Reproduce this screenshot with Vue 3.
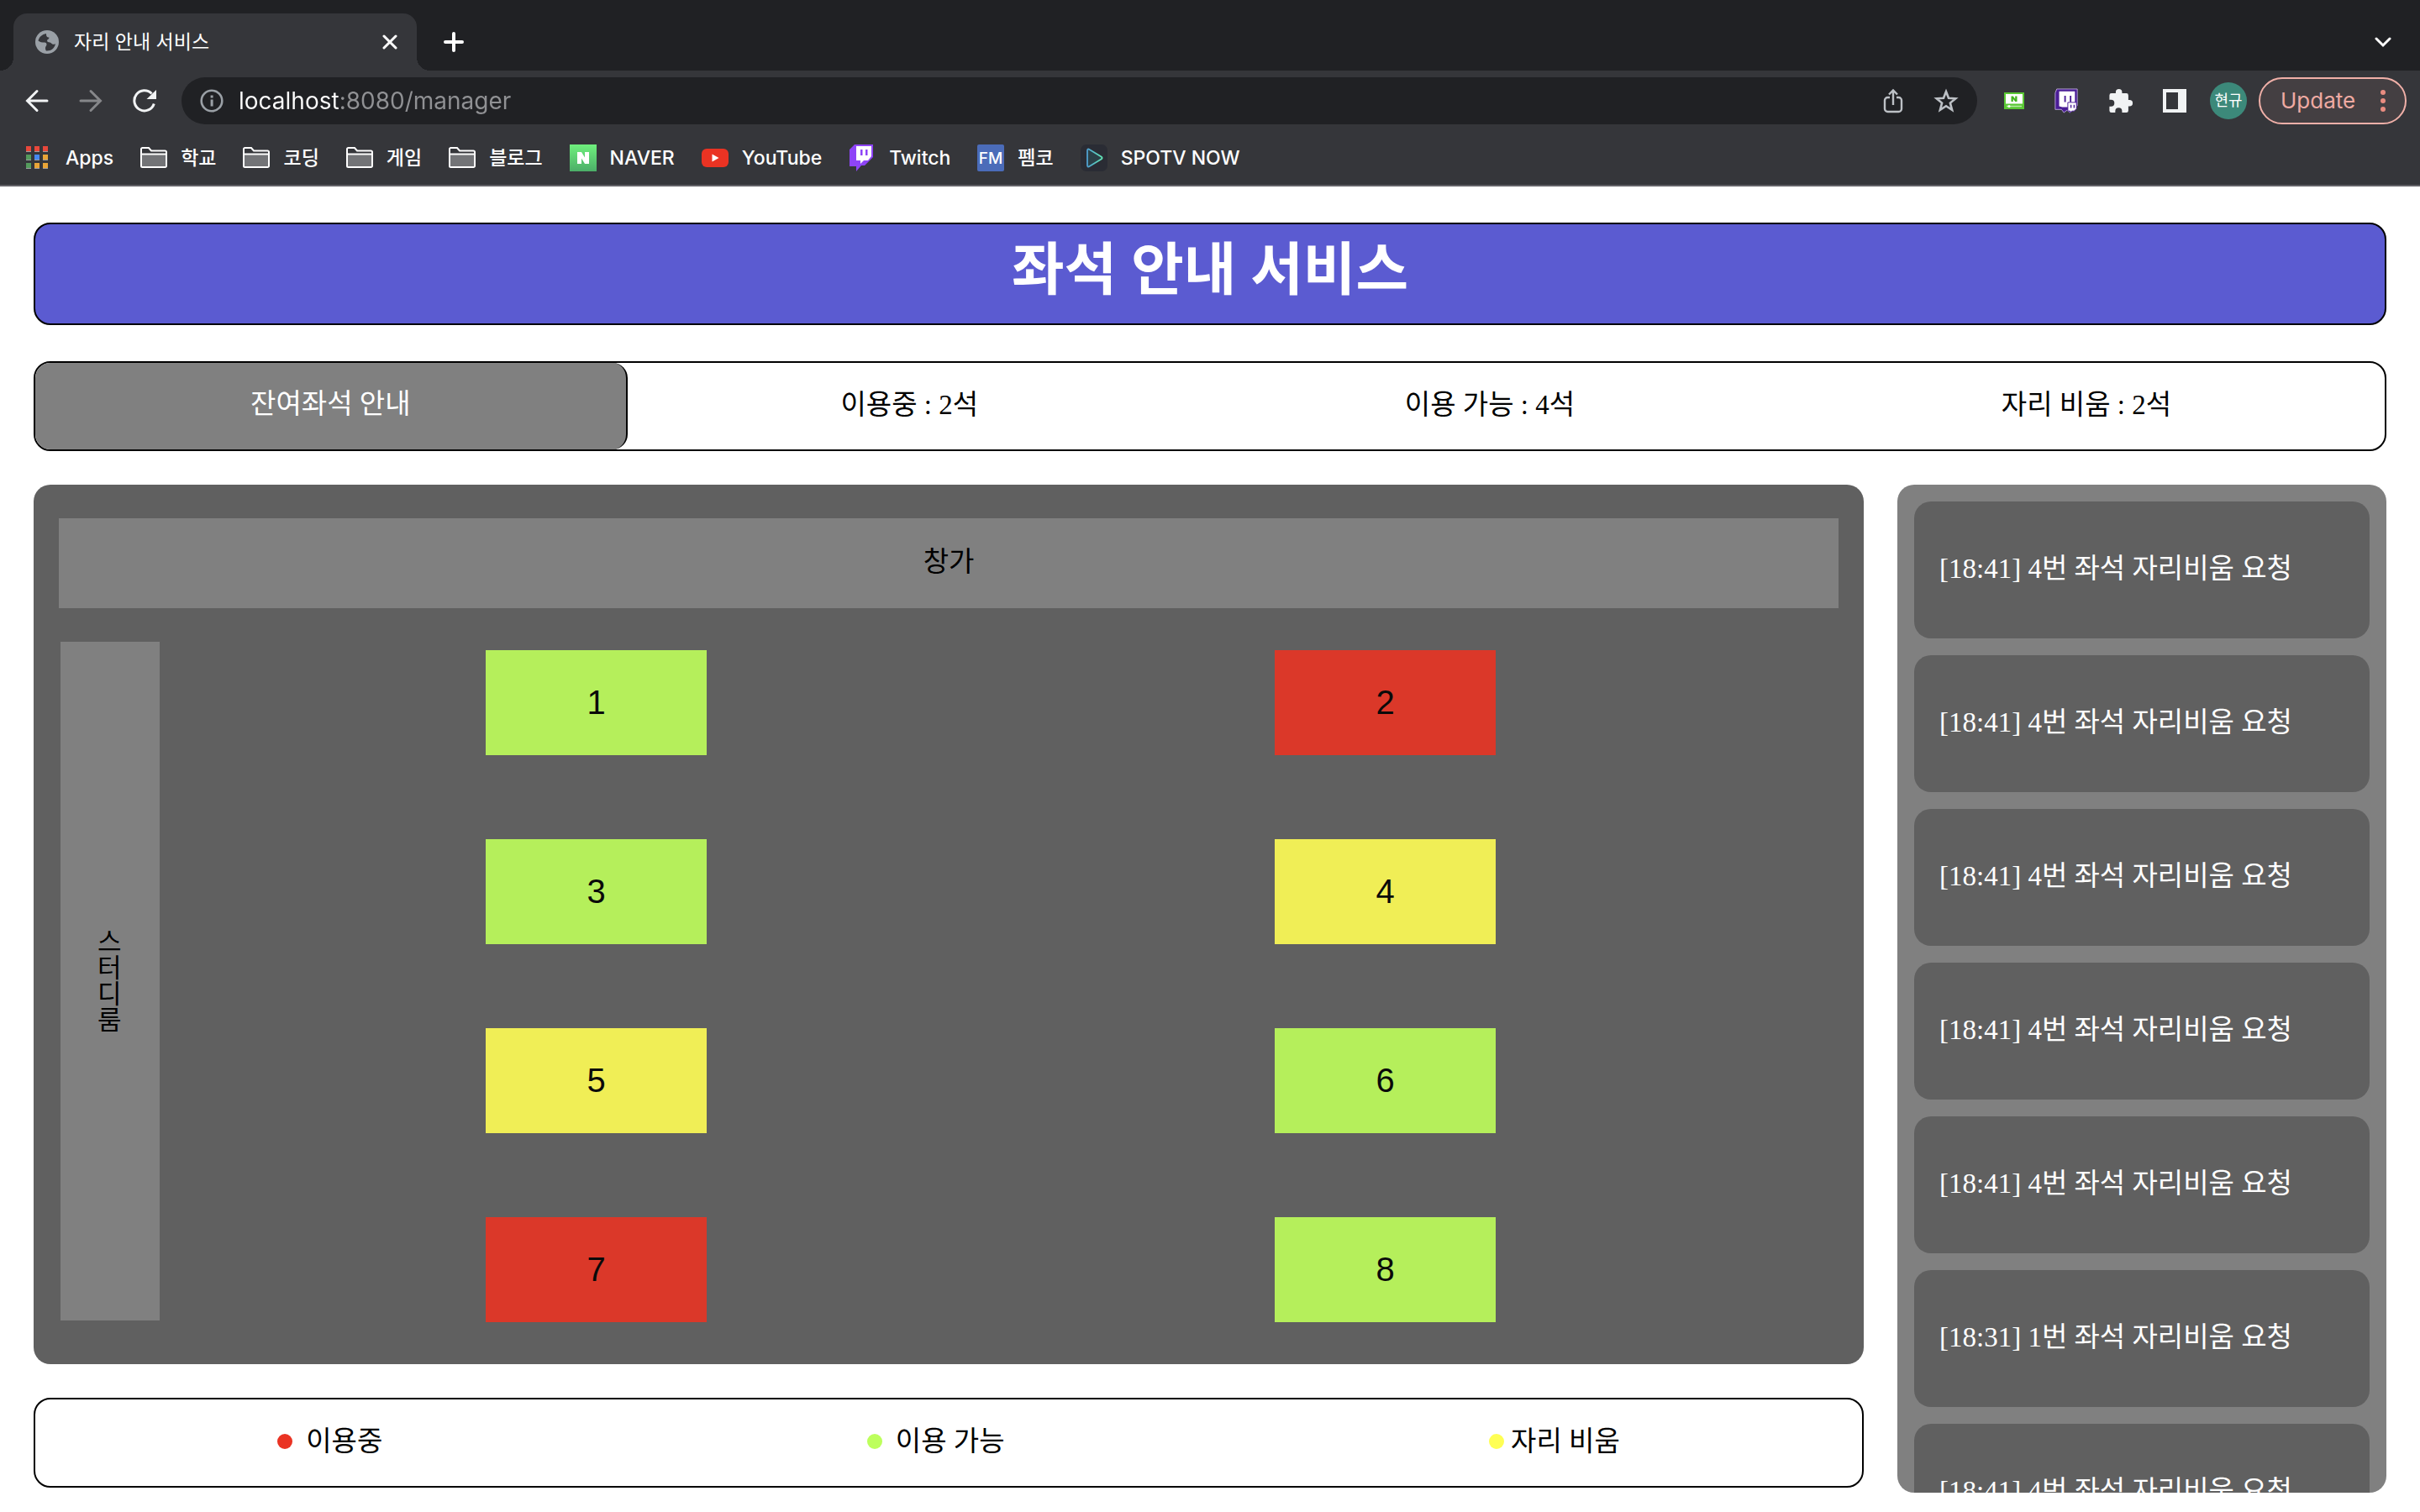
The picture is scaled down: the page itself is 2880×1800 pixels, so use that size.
<script setup>
import { ref } from 'vue'

const url = ref('localhost:8080/manager')

const bookmarks = [
  { label: 'Apps', icon: 'apps' },
  { label: '학교', icon: 'folder' },
  { label: '코딩', icon: 'folder' },
  { label: '게임', icon: 'folder' },
  { label: '블로그', icon: 'folder' },
  { label: 'NAVER', icon: 'naver' },
  { label: 'YouTube', icon: 'youtube' },
  { label: 'Twitch', icon: 'twitch' },
  { label: '펨코', icon: 'fm' },
  { label: 'SPOTV NOW', icon: 'spotv' },
]

const appColors = ['#e8483b', '#e8483b', '#e8483b', '#549b5c', '#4688f1', '#e9a537', '#549b5c', '#e9a537', '#e9a537']

const counts = ['이용중 : 2석', '이용 가능 : 4석', '자리 비움 : 2석']

const seats = [
  { id: 1, state: 'free' },
  { id: 2, state: 'used' },
  { id: 3, state: 'free' },
  { id: 4, state: 'away' },
  { id: 5, state: 'away' },
  { id: 6, state: 'free' },
  { id: 7, state: 'used' },
  { id: 8, state: 'free' },
]

const legend = [
  { label: '이용중', state: 'used' },
  { label: '이용 가능', state: 'free' },
  { label: '자리 비움', state: 'away' },
]

const requests = [
  '[18:41] 4번 좌석 자리비움 요청',
  '[18:41] 4번 좌석 자리비움 요청',
  '[18:41] 4번 좌석 자리비움 요청',
  '[18:41] 4번 좌석 자리비움 요청',
  '[18:41] 4번 좌석 자리비움 요청',
  '[18:31] 1번 좌석 자리비움 요청',
  '[18:41] 4번 좌석 자리비움 요청',
]
</script>

<template>
  <div class="window">
    <header class="browser">
      <div class="tabstrip">
        <div class="tab">
          <svg width="28" height="28" viewBox="0 0 28 28" aria-hidden="true">
            <circle cx="14" cy="14" r="14" fill="#9aa0a6" />
            <path d="M13 4c-5 1-8.500 4-9.500 8.500 2 1.800 4.500 2 7.500 2 1.800 0 2.500 1 2.500 2.500 0 1.800-1.500 2-1.500 4 0 1.500.3 2.500 1 3.500 6 .3 10-3 11-8.500-1.500 1.200-3.500 1.200-5-.5-1-1.200-2.500-1-4-1.500-1.300-.5-1.300-3 .5-3.500 2-.5 1.500-2 .5-2-2 0-3-1-3-4.500z" fill="#35363a" />
            <path d="M16 9c2 0 1.500 2 3.500 2.300" fill="none" stroke="#9aa0a6" />
          </svg>
          <span class="tab-title">자리 안내 서비스</span>
          <button class="icon-button" aria-label="탭 닫기">
            <svg width="18" height="18" viewBox="0 0 18 18" stroke="#fff" stroke-width="3" stroke-linecap="round"><path d="M2 2l14 14M16 2L2 16" /></svg>
          </button>
        </div>
        <button class="icon-button new-tab" aria-label="새 탭">
          <svg width="24" height="24" viewBox="0 0 24 24" stroke="#fff" stroke-width="4" stroke-linecap="round"><path d="M12 2v20M2 12h20" /></svg>
        </button>
        <button class="icon-button tab-search" aria-label="탭 검색">
          <svg width="20" height="14" viewBox="0 0 20 14" fill="none" stroke="#fff" stroke-width="3" stroke-linecap="round"><path d="M2 3l8 8 8-8" /></svg>
        </button>
      </div>

      <div class="toolbar">
        <nav class="history">
          <button class="icon-button" aria-label="뒤로">
            <svg width="28" height="28" viewBox="0 0 28 28" fill="none" stroke="#f1f3f4" stroke-width="3" stroke-linecap="round"><path d="M26 14H3M14 2.500L2.500 14 14 25.500" /></svg>
          </button>
          <button class="icon-button" aria-label="앞으로">
            <svg width="28" height="28" viewBox="0 0 28 28" fill="none" stroke="#86878a" stroke-width="3" stroke-linecap="round"><path d="M2 14h23M14 2.500L25.500 14 14 25.500" /></svg>
          </button>
          <button class="icon-button" aria-label="새로고침">
            <svg width="28" height="28" viewBox="0 0 28 28"><path d="M25.300 17.500A12 12 0 1 1 22.500 5.500" fill="none" stroke="#f1f3f4" stroke-width="3" /><path d="M28 1v11H16.500z" fill="#f1f3f4" /></svg>
          </button>
        </nav>

        <div class="omnibox">
          <svg width="28" height="28" viewBox="0 0 28 28" aria-hidden="true">
            <circle cx="14" cy="14" r="12.300" fill="none" stroke="#9aa0a6" stroke-width="2.600" />
            <path d="M12.600 7.500h3v3h-3zM12.600 12.500h3v8h-3z" fill="#9aa0a6" />
          </svg>
          <input v-model="url" class="url" type="text" aria-label="주소" />
          <button class="icon-button" aria-label="공유">
            <svg width="24" height="30" viewBox="0 0 24 30" fill="none" stroke="#bdc1c6" stroke-width="2.400"><path d="M8 11H5.500A3.500 3.500 0 0 0 2 14.500v10A3.500 3.500 0 0 0 5.500 28h13a3.500 3.500 0 0 0 3.500-3.500v-10A3.500 3.500 0 0 0 18.500 11H16M12 20V3M7 7.500l5-5 5 5" /></svg>
          </button>
          <button class="icon-button" aria-label="북마크에 추가">
            <svg width="30" height="30" viewBox="0 0 30 30" fill="none" stroke="#bdc1c6" stroke-width="2.600"><path d="M15 4l3 7.800 8.300.5-6.400 5.300 2.200 8.200L15 21.200l-7.100 4.600 2.200-8.200-6.400-5.300 8.300-.5z" /></svg>
          </button>
        </div>

        <div class="extensions">
          <button class="icon-button" aria-label="네이버 확장 프로그램">
            <svg width="24" height="20" viewBox="0 0 24 20"><path d="M0 0h24v20H0z" fill="#5ac834" /><path d="M2 2h20v11.500H2z" fill="#fff" /><path d="M8.500 11V4.500h2.300l2.400 3.200V4.500h2.300V11h-2.300l-2.400-3.200V11z" fill="#43b41e" /><path d="M3 16.500h18" stroke="#b9eba7" stroke-width="1.500" /><circle cx="6" cy="16.500" r="1.500" fill="#fff" /></svg>
          </button>
          <button class="icon-button" aria-label="트위치 확장 프로그램">
            <svg width="30" height="30" viewBox="0 0 30 32"><path d="M3 1h26v21l-9 9-4-3-4 3-3-4H1V6z" fill="#4a1d96" stroke="#b9a5d8" /><path d="M6 4h20v15l-5 5H10l-4-1z" fill="#fff" /><path d="M12.500 9.500h2v8h-2zM19.500 9.500h2v8h-2z" fill="#4a1d96" /><path d="M17 18h11v8l-3 3h-3l-2 2v-2h-3z" fill="#fff" stroke="#4a1d96" /><path d="M21 21v4M25 21v4" stroke="#4a1d96" stroke-width="1.500" /></svg>
          </button>
          <button class="icon-button" aria-label="확장 프로그램">
            <svg width="30" height="30" viewBox="0 0 30 32"><path d="M3 6.500h5.500V5a4 4 0 0 1 8 0v1.500H22a2.500 2.500 0 0 1 2.500 2.500v6H26a4 4 0 0 1 0 8h-1.500v5.500A2.500 2.500 0 0 1 22 31h-5.500v-2a4.300 4.300 0 0 0-8.600 0v2H3A2.500 2.500 0 0 1 .5 28.500v-5.200h2a4.300 4.300 0 0 0 0-8.600h-2V9A2.500 2.500 0 0 1 3 6.500z" fill="#f1f3f4" /></svg>
          </button>
          <button class="icon-button" aria-label="사이드 패널">
            <svg width="28" height="28" viewBox="0 0 28 28"><path d="M0 0h28v28H0zM4 4v20h14V4z" fill="#f1f3f4" fill-rule="evenodd" /></svg>
          </button>
          <button class="avatar">현규</button>
          <button class="update">
            Update
            <svg width="6" height="28" viewBox="0 0 6 28" fill="#e98c80" aria-hidden="true"><circle cx="3" cy="4" r="3" /><circle cx="3" cy="14" r="3" /><circle cx="3" cy="24" r="3" /></svg>
          </button>
        </div>
      </div>

      <nav class="bookmarks">
        <a v-for="mark in bookmarks" :key="mark.label" href="#" class="bookmark">
          <svg v-if="mark.icon === 'apps'" width="32" height="32" viewBox="0 0 32 32">
            <g v-for="(color, i) in appColors" :key="i">
              <rect :x="1 + (i % 3) * 10" :y="2 + Math.floor(i / 3) * 10" width="6" height="7" fill="#9b9ca0" />
              <rect :x="1 + (i % 3) * 10" :y="2 + Math.floor(i / 3) * 10" width="6" height="6" :fill="color" />
            </g>
          </svg>
          <svg v-else-if="mark.icon === 'folder'" width="32" height="32" viewBox="0 0 32 32">
            <path d="M1 11h30v15H1z" fill="#737477" />
            <path d="M1 5.500a1.500 1.500 0 0 1 1.500-1.500h7.500l3 3.500h16.500A1.500 1.500 0 0 1 31 9v16.500a1.500 1.500 0 0 1-1.500 1.500h-27A1.500 1.500 0 0 1 1 25.500zM1 11.500h30" fill="none" stroke="#fff" stroke-width="2" />
          </svg>
          <svg v-else-if="mark.icon === 'naver'" width="32" height="32" viewBox="0 0 32 32">
            <defs><linearGradient id="naver" x2="0" y2="1"><stop stop-color="#6ff07d" /><stop offset="1" stop-color="#4cae68" /></linearGradient></defs>
            <path d="M0 0h32v32H0z" fill="url(#naver)" />
            <path d="M9 9h5l4 6.500V9h5v14h-5l-4-6.500V23H9z" fill="#fff" />
          </svg>
          <svg v-else-if="mark.icon === 'youtube'" width="32" height="32" viewBox="0 0 32 32">
            <rect y="5" width="32" height="22" rx="6" fill="#ea3323" /><path d="M12.500 11.500v9l8-4.500z" fill="#fff" />
          </svg>
          <svg v-else-if="mark.icon === 'twitch'" width="32" height="32" viewBox="0 0 32 32">
            <path d="M7 0h22v15L19 25h-4l-6 7v-6H1V6z" fill="#8e44f7" /><path d="M9 2h18v12l-4 5h-5l-4 4v-4H9z" fill="#fff" /><path d="M14 6h2.500v7H14zM20 6h2.500v7H20z" fill="#8e44f7" />
          </svg>
          <svg v-else-if="mark.icon === 'fm'" width="32" height="32" viewBox="0 0 32 32">
            <rect width="32" height="32" rx="2" fill="#4b6cb9" /><text x="16" y="23" text-anchor="middle" font-size="19" fill="#fff">FM</text>
          </svg>
          <svg v-else width="32" height="32" viewBox="0 0 32 32">
            <defs><linearGradient id="spotv" x2="1"><stop stop-color="#4f9fd0" /><stop offset="1" stop-color="#62e6b5" /></linearGradient></defs>
            <rect width="32" height="32" rx="7" fill="#2a2c34" /><path d="M8 7.500c0-2 1-2.500 2.500-1.500l14 8.500c1.500 1 1.500 2 0 3l-14 8.500c-1.500 1-2.500.5-2.500-1.500z" fill="#2b4047" stroke="url(#spotv)" stroke-width="1.800" />
          </svg>
          {{ mark.label }}
        </a>
      </nav>
    </header>

    <main class="page">
      <h1 class="title">좌석 안내 서비스</h1>

      <section class="summary">
        <h2 class="summary-title">잔여좌석 안내</h2>
        <div class="summary-counts">
          <span v-for="count in counts" :key="count">{{ count }}</span>
        </div>
      </section>

      <div class="content">
        <div class="left">
          <section class="room">
            <div class="window-side">창가</div>
            <div class="floor">
              <div class="study-room"><span>스터디룸</span></div>
              <div class="seats">
                <button v-for="seat in seats" :key="seat.id" class="seat" :class="seat.state">{{ seat.id }}</button>
              </div>
            </div>
          </section>
          <ul class="legend">
            <li v-for="item in legend" :key="item.state" :class="item.state">
              <span class="dot"></span>{{ item.label }}
            </li>
          </ul>
        </div>

        <ul class="requests">
          <li v-for="(request, i) in requests" :key="i" class="request">{{ request }}</li>
        </ul>
      </div>
    </main>
  </div>
</template>

<style>
body {
  margin: 0;
  background: #fff;
}
</style>

<style scoped>
.window {
  font-family: "Liberation Serif", "Noto Sans CJK KR", serif;
  font-size: 33px;
  line-height: 40px;
  color: #000;
}

.window *,
.window *::before,
.window *::after {
  box-sizing: border-box;
}

ul {
  margin: 0;
  padding: 0;
  list-style: none;
}

button,
input {
  margin: 0;
  padding: 0;
  border: 0;
  background: none;
  font: inherit;
}

svg {
  display: block;
  flex: none;
}

/* Browser frame */
.browser {
  background: #35363a;
  border-bottom: 2px solid #626166;
  color: #fff;
  font-family: Inter, "Noto Sans CJK KR", sans-serif;
  font-size: 23px;
  line-height: 32px;
}

.icon-button {
  display: flex;
  align-items: center;
  justify-content: center;
}

.tabstrip {
  display: flex;
  align-items: flex-end;
  height: 84px;
  padding: 0 34px 0 16px;
  background: #202124;
}

.tab {
  position: relative;
  display: flex;
  align-items: center;
  gap: 18px;
  width: 480px;
  height: 68px;
  padding: 0 23px 0 26px;
  border-radius: 16px 16px 0 0;
  background: #35363a;
}

.tab::before,
.tab::after {
  content: "";
  position: absolute;
  bottom: 0;
  width: 16px;
  height: 16px;
}

.tab::before {
  right: 100%;
  background: radial-gradient(circle at 0 0, #202124 16px, #35363a 16px);
}

.tab::after {
  left: 100%;
  background: radial-gradient(circle at 100% 0, #202124 16px, #35363a 16px);
}

.tab-title {
  flex: 1;
}

.new-tab {
  height: 68px;
  margin-left: 32px;
}

.tab-search {
  height: 68px;
  margin-left: auto;
}

.toolbar {
  display: flex;
  align-items: center;
  height: 72px;
  padding: 0 16px 0 30px;
}

.history {
  display: flex;
  gap: 36px;
}

.omnibox {
  display: flex;
  flex: 1;
  align-items: center;
  gap: 36px;
  height: 56px;
  margin-left: 30px;
  padding: 0 22px;
  border-radius: 28px;
  background: #202124;
}

.url {
  flex: 1;
  min-width: 0;
  margin-left: -18px;
  outline: 0;
  background: linear-gradient(90deg, #fff 119px, #909194 119px);
  background-clip: text;
  color: transparent;
  font-size: 28px;
  line-height: 40px;
}

.extensions {
  display: flex;
  align-items: center;
  gap: 35px;
  margin-left: 32px;
}

.avatar {
  width: 44px;
  height: 44px;
  margin-left: -7px;
  border-radius: 50%;
  background: #3c897a;
  color: #fff;
  font-size: 18px;
  line-height: 44px;
}

.update {
  display: flex;
  align-items: center;
  justify-content: space-between;
  width: 176px;
  height: 56px;
  margin-left: -21px;
  padding: 0 23px 0 24px;
  border: 2px solid #f0b0a8;
  border-radius: 28px;
  background: #443f42;
  color: #efaaa2;
  font-size: 26px;
}

.bookmarks {
  display: flex;
  align-items: center;
  gap: 32px;
  height: 64px;
  padding: 0 30px;
}

.bookmark {
  display: flex;
  align-items: center;
  gap: 16px;
  color: #fff;
  font-weight: 500;
  text-decoration: none;
}

/* Seat page */
.page {
  padding: 43px 40px 20px;
}

.title {
  display: flex;
  justify-content: center;
  height: 122px;
  margin: 0 0 43px;
  border: 2px solid #000;
  border-radius: 20px;
  background: #5b5bd1;
  color: #fff;
  font-size: 68px;
  line-height: 110px;
}

.summary {
  display: flex;
  height: 107px;
  margin-bottom: 40px;
  border: 2px solid #000;
  border-radius: 20px;
  line-height: 100px;
}

.summary-title {
  width: 25.2%;
  margin: 0;
  border-right: 2px solid #000;
  border-radius: 18px;
  background: #808080;
  color: #fff;
  font-size: 33px;
  font-weight: 400;
  line-height: 98px;
  text-align: center;
}

.summary-counts {
  display: flex;
  flex: 1;
  justify-content: space-around;
}

.content {
  display: flex;
  align-items: flex-start;
  gap: 40px;
}

.left {
  flex: 1;
}

.room {
  padding: 40px 30px 50px;
  border-radius: 20px;
  background: #606060;
}

.window-side {
  height: 107px;
  background: #808080;
  line-height: 105px;
  text-align: center;
}

.floor {
  display: flex;
  gap: 50px;
  margin-top: 40px;
  padding: 0 70px 0 2px;
}

.study-room {
  display: flex;
  align-items: center;
  justify-content: center;
  width: 118px;
  margin-bottom: 2px;
  background: #808080;
}

.study-room span {
  width: 30px;
  font-size: 31px;
  line-height: 31px;
  word-break: break-all;
}

.seats {
  display: grid;
  flex: 1;
  grid-template-columns: 1fr 1fr;
  gap: 100px 0;
  justify-items: center;
  padding-top: 10px;
}

.seat {
  width: 28%;
  height: 125px;
  padding-bottom: 2px;
  color: #0a0a0a;
  font-family: "Liberation Sans", Arial, sans-serif;
  font-size: 40px;
}

.seat.free {
  background: #b5ef5b;
}

.seat.used {
  background: #db3829;
}

.seat.away {
  background: #f0ee56;
}

.legend {
  display: flex;
  justify-content: space-around;
  height: 107px;
  margin-top: 40px;
  padding-bottom: 4px;
  border: 2px solid #000;
  border-radius: 20px;
}

.legend li {
  display: flex;
  align-items: center;
  gap: 16px;
}

.legend .away {
  gap: 8px;
}

.dot {
  width: 18px;
  height: 18px;
  border-radius: 50%;
}

.used .dot {
  background: #ea3323;
}

.free .dot {
  background: #bdff5c;
}

.away .dot {
  background: #ffff54;
}

.requests {
  display: flex;
  flex-direction: column;
  gap: 20px;
  width: 582px;
  max-height: 1200px;
  padding: 20px;
  border-radius: 20px;
  background: #808080;
  overflow: hidden;
}

.request {
  flex: none;
  padding: 60px 30px 63px;
  border-radius: 20px;
  background: #606060;
  color: #fff;
}
</style>
